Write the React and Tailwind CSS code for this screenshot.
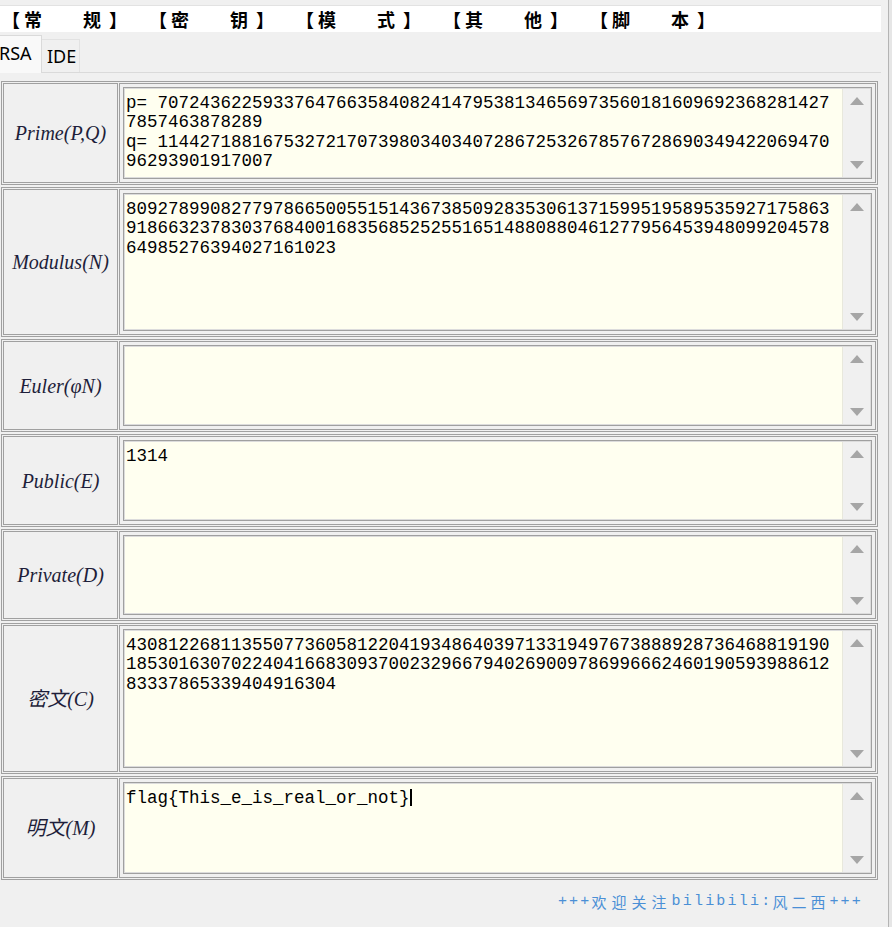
import React from 'react';

const menu = [
  ['常', '规'],
  ['密', '钥'],
  ['模', '式'],
  ['其', '他'],
  ['脚', '本'],
];

const rows = [
  {
    label: 'Prime(P,Q)',
    h: 'h-[90px]',
    lines: [
      'p= 7072436225933764766358408241479538134656973560181609692368281427',
      '7857463878289',
      'q= 1144271881675327217073980340340728672532678576728690349422069470',
      '96293901917007',
    ],
  },
  {
    label: 'Modulus(N)',
    h: 'h-[136px]',
    lines: [
      '8092789908277978665005515143673850928353061371599519589535927175863',
      '9186632378303768400168356852525516514880880461277956453948099204578',
      '64985276394027161023',
    ],
  },
  { label: 'Euler(φN)', h: 'h-[79px]', lines: [] },
  { label: 'Public(E)', h: 'h-[79px]', lines: ['1314'] },
  { label: 'Private(D)', h: 'h-[78px]', lines: [] },
  {
    label: '密文(C)',
    h: 'h-[137px]',
    lines: [
      '4308122681135507736058122041934864039713319497673888928736468819190',
      '1853016307022404166830937002329667940269009786996662460190593988612',
      '83337865339404916304',
    ],
  },
  { label: '明文(M)', h: 'h-[90px]', lines: ['flag{This_e_is_real_or_not}'], cursor: true },
];

function Arrow({ up }) {
  return (
    <svg width="14" height="8" viewBox="0 0 14 8">
      <path d={up ? 'M7 0 L14 8 L0 8 Z' : 'M0 0 L14 0 L7 8 Z'} fill="#a6a6a6" />
    </svg>
  );
}

function Row({ row }) {
  return (
    <div className="border border-[#a0a0a0] p-px flex gap-px">
      <div className="w-[115px] shrink-0 border border-[#a0a0a0] bg-[#f0f0f0] flex items-center justify-center italic text-[20px] text-[#1e1e3a] font-['Liberation_Serif','Noto_Sans_CJK_SC',serif]">
        {row.label}
      </div>
      <div className="flex-1 border border-[#a0a0a0] p-[3px]">
        <div className="border border-[#a0a0a0]">
          <div className={`flex border border-[#dcdcdc] ${row.h}`}>
            <div className="flex-1 bg-[#fffff0] border-r border-[#e8e8dc] pl-px pt-[5px] overflow-hidden">
              <div className="font-['Liberation_Mono',monospace] text-[17.5px] leading-[19.3px] text-black whitespace-pre">
                {row.lines.map((l, i) => (
                  <div key={i}>
                    {l}
                    {row.cursor && <span className="inline-block w-[2px] h-[17px] bg-black align-[-3px]" />}
                  </div>
                ))}
              </div>
            </div>
            <div className="w-[27px] bg-[#f0f0f0] flex flex-col items-center justify-between py-[8px]">
              <Arrow up />
              <Arrow />
            </div>
          </div>
        </div>
      </div>
    </div>
  );
}

export default function App() {
  return (
    <div className="w-[892px] h-[927px] overflow-hidden bg-[#f0f0f0] flex">
      <div className="w-[881px] shrink-0 flex flex-col">
        <div className="h-[6px] bg-[#f0f0f0] border-b border-[#e2e2e2]" />
        <div className="h-[26px] bg-white flex items-center pl-[2px] font-['Noto_Sans_CJK_SC',sans-serif] font-bold text-[18px] text-black">
          {menu.map(([a, b], i) => (
            <div key={i} className="w-[147px] flex leading-none">
              <span className="w-[18px]">【</span>
              <span className="w-[18px] ml-[4px]">{a}</span>
              <span className="w-[18px] ml-[41px]">{b}</span>
              <span className="w-[18px] ml-[8px]">】</span>
            </div>
          ))}
        </div>
        <div className="h-[41px] flex items-end border-b border-[#dadada] font-['Noto_Sans',sans-serif] text-[18px] text-black">
          <div className="w-[42px] h-[38px] bg-[#f9f9f9] border-t border-r border-[#dadada] -mb-px pt-[5px] leading-[24px]">
            <span className="-ml-px">RSA</span>
          </div>
          <div className="w-[38px] h-[33px] border-t border-r border-[#e2e2e2] pt-[4px] pl-[5px] leading-[24px]">
            IDE
          </div>
        </div>
        <div className="pl-px pr-[3px] pt-[8px] flex flex-col gap-[2px]">
          {rows.map((r, i) => (
            <Row key={i} row={r} />
          ))}
        </div>
        <div className="flex-1 flex items-center justify-end pr-[18px] text-[#4a8fd6] pb-[2px]">
          <span className="font-['Liberation_Mono',monospace] text-[15px] tracking-[2.2px]">+++</span>
          <span className="font-['Noto_Sans_CJK_SC',sans-serif] text-[15px] tracking-[5px]">欢迎关注</span>
          <span className="font-['Liberation_Mono',monospace] text-[15px] tracking-[2.2px]">bilibili:</span>
          <span className="font-['Noto_Sans_CJK_SC',sans-serif] text-[15px] tracking-[4px]">风二西</span>
          <span className="font-['Liberation_Mono',monospace] text-[15px] tracking-[2.2px]">+++</span>
        </div>
      </div>
      <div className="flex-1 flex">
        <div className="w-[7px]" />
        <div className="w-px bg-[#b4b4b4]" />
        <div className="flex-1 bg-[#e6e6e6]" />
      </div>
    </div>
  );
}
